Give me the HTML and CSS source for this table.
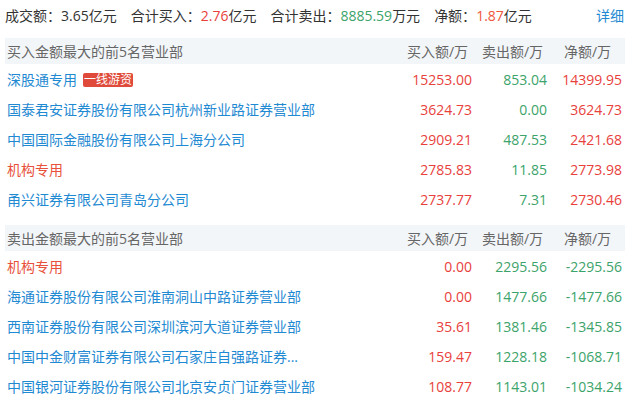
FILE: index.html
```html
<!DOCTYPE html>
<html lang="zh-CN">
<head>
<meta charset="utf-8">
<title>龙虎榜</title>
<link rel="stylesheet" href="styles.css">
</head>
<body>
<div class="wrap">
  <div class="summary">
    <span class="item">成交额：3.65亿元</span>
    <span class="item">合计买入：<em class="up">2.76</em>亿元</span>
    <span class="item">合计卖出：<em class="down">8885.59</em>万元</span>
    <span class="item">净额：<em class="up2">1.87</em>亿元</span>
    <a class="detail">详细</a>
  </div>

  <div class="grid">
    <div class="hd name">买入金额最大的前5名营业部</div>
    <div class="hd">买入额/万</div>
    <div class="hd">卖出额/万</div>
    <div class="hd">净额/万</div>

    <div class="name"><span class="org">深股通专用</span><span class="tag">一线游资</span></div>
    <div class="num up">15253.00</div><div class="num down">853.04</div><div class="num up">14399.95</div>

    <div class="name"><span class="org">国泰君安证券股份有限公司杭州新业路证券营业部</span></div>
    <div class="num up">3624.73</div><div class="num down">0.00</div><div class="num up">3624.73</div>

    <div class="name"><span class="org">中国国际金融股份有限公司上海分公司</span></div>
    <div class="num up">2909.21</div><div class="num down">487.53</div><div class="num up">2421.68</div>

    <div class="name"><span class="org inst">机构专用</span></div>
    <div class="num up">2785.83</div><div class="num down">11.85</div><div class="num up">2773.98</div>

    <div class="name"><span class="org">甬兴证券有限公司青岛分公司</span></div>
    <div class="num up">2737.77</div><div class="num down">7.31</div><div class="num up">2730.46</div>
  </div>

  <div class="grid second">
    <div class="hd name">卖出金额最大的前5名营业部</div>
    <div class="hd">买入额/万</div>
    <div class="hd">卖出额/万</div>
    <div class="hd">净额/万</div>

    <div class="name"><span class="org inst">机构专用</span></div>
    <div class="num up">0.00</div><div class="num down">2295.56</div><div class="num down">-2295.56</div>

    <div class="name"><span class="org">海通证券股份有限公司淮南洞山中路证券营业部</span></div>
    <div class="num up">0.00</div><div class="num down">1477.66</div><div class="num down">-1477.66</div>

    <div class="name"><span class="org">西南证券股份有限公司深圳滨河大道证券营业部</span></div>
    <div class="num up">35.61</div><div class="num down">1381.46</div><div class="num down">-1345.85</div>

    <div class="name"><span class="org">中国中金财富证券有限公司石家庄自强路证券...</span></div>
    <div class="num up">159.47</div><div class="num down">1228.18</div><div class="num down">-1068.71</div>

    <div class="name"><span class="org">中国银河证券股份有限公司北京安贞门证券营业部</span></div>
    <div class="num up">108.77</div><div class="num down">1143.01</div><div class="num down">-1034.24</div>
  </div>
</div>
</body>
</html>
```

FILE: styles.css
```css
html, body {
  margin: 0;
  padding: 0;
  background: #ffffff;
}

body {
  font-family: "Open Sans", "Noto Sans CJK SC", sans-serif;
  font-size: 14px;
  color: #333333;
}

.wrap {
  width: 620px;
  padding: 0 5px;
}

.summary {
  display: flex;
  align-items: center;
  height: 30px;
  white-space: nowrap;
}

.summary .item {
  margin-right: 14px;
}

.summary em {
  font-style: normal;
}

.detail {
  margin-left: auto;
  margin-right: 1px;
  color: #1f8ad2;
  cursor: pointer;
}

.up { color: #e8413c; }
.up2 { color: #f0563a; }
.down { color: #3ca36a; }

.grid {
  display: grid;
  grid-template-columns: 1fr 75px 75px 75px;
  grid-template-rows: 26px repeat(5, 30px);
  margin-top: 8px;
}

.grid.second {
  margin-top: 11px;
}

.grid > div {
  display: flex;
  align-items: center;
  white-space: nowrap;
  overflow: hidden;
}

.grid .hd {
  background: #f3f6f9;
  color: #666666;
  justify-content: center;
}

.grid .hd.name {
  justify-content: flex-start;
  padding-left: 2px;
}

.grid .name {
  padding-left: 2px;
}

.org {
  color: #1f8ad2;
}

.org.inst {
  color: #e8513c;
}

.tag {
  margin-left: 6px;
  padding: 0 1px;
  height: 14px;
  line-height: 14px;
  font-size: 12px;
  color: #ffffff;
  background: #e04a3a;
  border-radius: 2px;
  margin-top: 1px;
}

.grid .num {
  justify-content: flex-end;
  padding-right: 3px;
}
```
